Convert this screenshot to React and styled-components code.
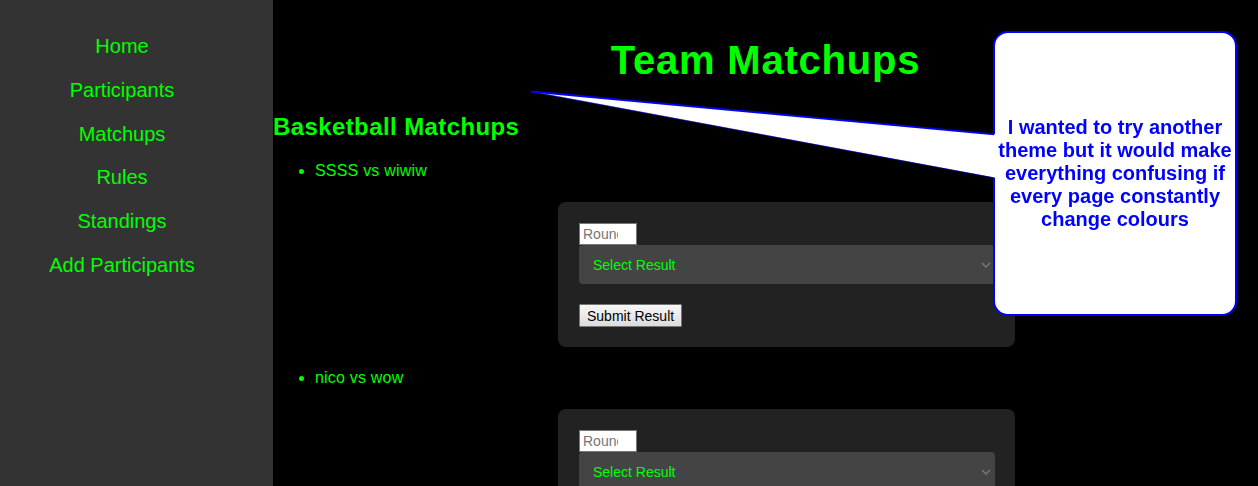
import React from 'react'
import styled, { createGlobalStyle } from 'styled-components'

const GlobalStyle = createGlobalStyle`
    html, body {
        margin: 0;
        padding: 0;
        background: #000000;
        font-family: 'Liberation Sans', Arial, sans-serif;
    }
`

const navLinks = ['Home', 'Participants', 'Matchups', 'Rules', 'Standings', 'Add Participants']

const matchups = [
    { id: 1, title: 'SSSS vs wiwiw' },
    { id: 2, title: 'nico vs wow' },
]

const ChevronDown = () => (
    <svg width='10' height='6' viewBox='0 0 10 6' fill='none'>
        <polyline points='1,1 5,5 9,1' stroke='#7a7a7a' strokeWidth='1.4' />
    </svg>
)

const MatchupCard = () => (
    <Card>
        <RoundInput type='text' placeholder='Round' />
        <SelectWrap>
            <Select defaultValue=''>
                <option value=''>Select Result</option>
                <option value='p1'>Player 1 wins</option>
                <option value='p2'>Player 2 wins</option>
                <option value='draw'>Draw</option>
            </Select>
            <Chevron>
                <ChevronDown />
            </Chevron>
        </SelectWrap>
        <SubmitButton type='button'>Submit Result</SubmitButton>
    </Card>
)

const App = () => {
    return (
        <>
            <GlobalStyle />
            <Layout>
                <Sidebar>
                    <NavList>
                        {navLinks.map((link) => (
                            <NavItem key={link}>
                                <NavLink href='#'>{link}</NavLink>
                            </NavItem>
                        ))}
                    </NavList>
                </Sidebar>
                <Main>
                    <Title>Team Matchups</Title>
                    <SportTitle>Basketball Matchups</SportTitle>
                    <MatchList>
                        {matchups.map((m) => (
                            <MatchItem key={m.id}>
                                {m.title}
                                <MatchupCard />
                            </MatchItem>
                        ))}
                    </MatchList>
                </Main>
            </Layout>

            <Bubble>
                <Tail width='470' height='100' viewBox='0 0 470 100'>
                    <polygon points='2,5.5 468,48.5 468,92' fill='#ffffff' />
                    <line x1='2' y1='5.5' x2='465' y2='48.3' stroke='#0000ff' strokeWidth='1.8' />
                    <line x1='2' y1='5.5' x2='465' y2='91.8' stroke='#0000ff' strokeWidth='1' strokeOpacity='0.55' />
                </Tail>
                <BubbleText>
                    I wanted to try another theme but it would make everything confusing if every page constantly change
                    colours
                </BubbleText>
            </Bubble>
        </>
    )
}

export default App

const Layout = styled.div`
    display: flex;
    min-height: 100vh;
`

const Sidebar = styled.nav`
    width: 273px;
    flex-shrink: 0;
    background: #333333;
    padding: 25px 29px 0 0;
    box-sizing: border-box;
`

const NavList = styled.ul`
    list-style: none;
    margin: 0;
    padding: 0;
    text-align: center;
`

const NavItem = styled.li`
    padding: 10px 0;
    font-size: 20px;
    line-height: 23.8px;
`

const NavLink = styled.a`
    color: #00ff00;
    text-decoration: none;
`

const Main = styled.main`
    flex: 1;
    background: #000000;
    padding-top: 37px;
    color: #00ff00;
`

const Title = styled.h1`
    margin: 0 0 30px;
    font-size: 40px;
    line-height: 46px;
    letter-spacing: 0.8px;
    text-align: center;
    color: #00ff00;
`

const SportTitle = styled.h2`
    margin: 0 0 21px;
    font-size: 24px;
    line-height: 27.6px;
    letter-spacing: 0.4px;
    color: #00ff00;
`

const MatchList = styled.ul`
    margin: 0;
    padding-left: 42px;
`

const MatchItem = styled.li`
    font-size: 16px;
    line-height: 18.4px;
    letter-spacing: 0.2px;
    color: #00ff00;
`

const Card = styled.div`
    width: 457px;
    box-sizing: border-box;
    margin: 22px auto;
    padding: 21px 20px 20px 21px;
    background: #222222;
    border-radius: 8px;
    letter-spacing: normal;
`

const RoundInput = styled.input`
    display: block;
    width: 58px;
    height: 22px;
    box-sizing: border-box;
    margin: 0;
    padding: 0 18px 0 3px;
    border: 1px solid #767676;
    background: #ffffff;
    font-family: 'Liberation Sans', Arial, sans-serif;
    font-size: 14px;
    color: #000000;

    &::placeholder {
        color: #757575;
    }
`

const SelectWrap = styled.div`
    position: relative;
    margin-bottom: 20px;
`

const Select = styled.select`
    display: block;
    width: 100%;
    height: 39px;
    margin: 0;
    padding: 0 14px;
    appearance: none;
    border: none;
    border-radius: 4px;
    background: #444444;
    color: #00ff00;
    font-family: 'Liberation Sans', Arial, sans-serif;
    font-size: 14px;
`

const Chevron = styled.span`
    position: absolute;
    right: 4px;
    top: 17px;
    display: flex;
    pointer-events: none;
`

const SubmitButton = styled.button`
    display: block;
    height: 23px;
    margin: 0;
    padding: 1px 7px;
    border: 1px solid #767676;
    border-radius: 1px;
    background: linear-gradient(#f7f7f7, #dcdcdc);
    color: #000000;
    font-family: 'Liberation Sans', Arial, sans-serif;
    font-size: 14px;
`

const Bubble = styled.div`
    position: fixed;
    top: 31px;
    right: 21px;
    width: 244px;
    height: 285px;
    box-sizing: border-box;
    padding: 0;
    background: #ffffff;
    border: 2px solid #0000ff;
    border-radius: 15px;
    display: flex;
    align-items: center;
    justify-content: center;
`

const Tail = styled.svg`
    position: absolute;
    left: -466px;
    top: 53px;
    overflow: visible;
`

const BubbleText = styled.p`
    margin: 0;
    text-align: center;
    color: #0000ff;
    font-size: 20px;
    font-weight: bold;
    line-height: 23px;
`
